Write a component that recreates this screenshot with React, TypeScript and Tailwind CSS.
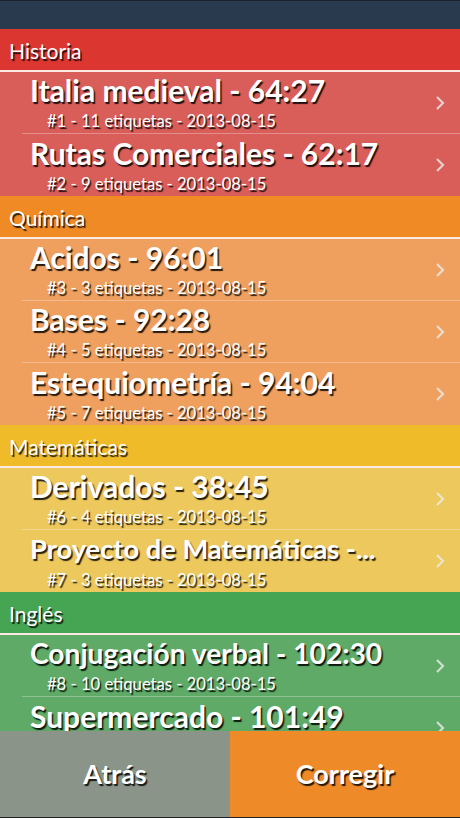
const sections = [
  {
    name: 'Historia',
    head: 'bg-[#dc3631]',
    row: 'bg-[#d95e5a]',
    items: [
      { title: 'Italia medieval - 64:27', sub: '#1 - 11 etiquetas - 2013-08-15' },
      { title: 'Rutas Comerciales - 62:17', sub: '#2 - 9 etiquetas - 2013-08-15' },
    ],
  },
  {
    name: 'Química',
    head: 'bg-[#ef8a24]',
    row: 'bg-[#f0a05e]',
    items: [
      { title: 'Acidos - 96:01', sub: '#3 - 3 etiquetas - 2013-08-15' },
      { title: 'Bases - 92:28', sub: '#4 - 5 etiquetas - 2013-08-15' },
      { title: 'Estequiometría - 94:04', sub: '#5 - 7 etiquetas - 2013-08-15' },
    ],
  },
  {
    name: 'Matemáticas',
    head: 'bg-[#efbb29]',
    row: 'bg-[#edc85c]',
    items: [
      { title: 'Derivados - 38:45', sub: '#6 - 4 etiquetas - 2013-08-15' },
      { title: 'Proyecto de Matemáticas -...', sub: '#7 - 3 etiquetas - 2013-08-15', size: 'text-[27.3px]' },
    ],
  },
  {
    name: 'Inglés',
    head: 'bg-[#45a553]',
    row: 'bg-[#5eaa66]',
    items: [
      { title: 'Conjugación verbal - 102:30', sub: '#8 - 10 etiquetas - 2013-08-15', size: 'text-[28.2px]' },
      { title: 'Supermercado - 101:49', sub: '#9 - 6 etiquetas - 2013-08-15' },
    ],
  },
];

const shadow = '[text-shadow:1.5px_1.5px_1px_rgba(0,0,0,0.85)]';

function Chevron() {
  return (
    <svg width="10" height="16" viewBox="0 0 10 16" className="shrink-0">
      <path d="M2 2 L8 8 L2 14" fill="none" stroke="rgba(235,235,235,0.8)" strokeWidth="2.2" />
    </svg>
  );
}

export default function App() {
  return (
    <div className="w-[460px] h-[818px] flex flex-col overflow-hidden text-white font-['Lato','Noto_Sans',sans-serif]">
      <div className="h-[29px] shrink-0 bg-[#2a3a4e] border-t border-[#1b2330]" />
      <div className="flex-1 overflow-hidden">
        {sections.map((s) => (
          <section key={s.name}>
            <div className={`${s.head} h-[43px] pl-[9px] pt-[2px] flex items-center text-[21px] border-b-2 border-[#fbe9e6] ${shadow}`}>
              {s.name}
            </div>
            {s.items.map((it, i) => (
              <div key={it.title} className={`${s.row} h-[62px] flex flex-col`}>
                <div className="flex-1 flex items-center pl-[30px] pr-[15px]">
                  <div className="flex-1 min-w-0 pb-[1px]">
                    <div className={`${it.size ?? 'text-[30px]'} h-[32px] leading-[32px] font-bold whitespace-nowrap ${shadow}`}>{it.title}</div>
                    <div className={`mt-[7px] text-[16.6px] leading-[17px] pl-[17px] whitespace-nowrap ${shadow}`}>{it.sub}</div>
                  </div>
                  <Chevron />
                </div>
                {i < s.items.length - 1 && <div className="ml-[22px] h-px bg-white/30" />}
              </div>
            ))}
          </section>
        ))}
      </div>
      <div className="h-[87px] shrink-0 flex border-b border-[#222]">
        <button className={`w-[230px] bg-[#8a9488] text-[27px] font-bold ${shadow}`}>Atrás</button>
        <button className={`flex-1 bg-[#ef8a28] text-[27px] font-bold ${shadow}`}>Corregir</button>
      </div>
    </div>
  );
}
